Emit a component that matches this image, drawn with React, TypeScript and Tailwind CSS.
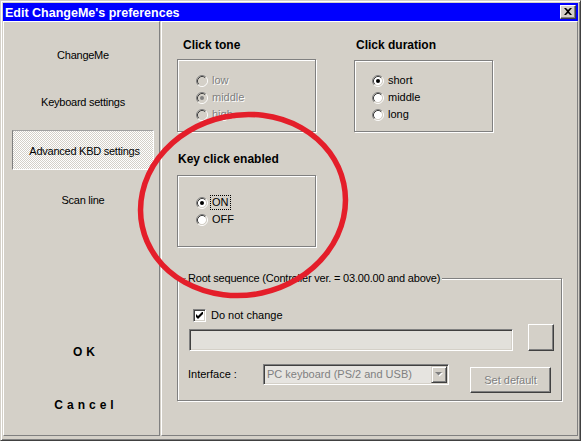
import React from "react";

const Radio = ({ checked = false, disabled = false }: { checked?: boolean; disabled?: boolean }) => (
  <svg width="12" height="12" viewBox="0 0 12 12" className="shrink-0">
    <circle cx="6" cy="6" r="4.2" fill={disabled ? "#d4d0c8" : "#ffffff"} />
    <path d="M2.11 9.89 A5.5 5.5 0 0 1 9.89 2.11" stroke="#808080" fill="none" />
    <path d="M9.89 2.11 A5.5 5.5 0 0 1 2.11 9.89" stroke="#ffffff" fill="none" />
    <path d="M2.82 9.18 A4.5 4.5 0 0 1 9.18 2.82" stroke="#404040" fill="none" />
    <path d="M9.18 2.82 A4.5 4.5 0 0 1 2.82 9.18" stroke="#d4d0c8" fill="none" />
    {checked && <circle cx="6" cy="6" r="2" fill={disabled ? "#808080" : "#000000"} />}
  </svg>
);

const RadioRow = ({
  label,
  checked = false,
  disabled = false,
  focus = false,
}: {
  label: string;
  checked?: boolean;
  disabled?: boolean;
  focus?: boolean;
}) => (
  <div className="flex items-center h-[17px] gap-[4px]">
    <Radio checked={checked} disabled={disabled} />
    {focus ? (
      <span className="border border-dotted border-black px-[1px] -ml-[2px] leading-[13px]">{label}</span>
    ) : (
      <span
        className={
          disabled ? "text-[#808080] [text-shadow:1px_1px_0_#ffffff] leading-[13px]" : "leading-[13px]"
        }
      >
        {label}
      </span>
    )}
  </div>
);

const Tab = ({ label, className = "" }: { label: string; className?: string }) => (
  <div className={`ml-[8px] w-[142px] h-[40px] flex items-center justify-center tracking-[-0.25px] ${className}`}>
    {label}
  </div>
);

export default function App() {
  return (
    <div className="relative w-[581px] h-[441px] overflow-hidden bg-[#d4d0c8] border border-t-[#d4d0c8] border-l-[#d4d0c8] border-r-[#404040] border-b-[#404040] shadow-[inset_1px_1px_0_#ffffff,inset_-1px_-1px_0_#808080] p-[2px] flex flex-col font-['Liberation_Sans',Arial,sans-serif] text-[11px] text-black">
      {/* Title bar */}
      <div className="h-[18px] shrink-0 bg-[#0000ff] flex items-center pl-[2px] pr-[2px]">
        <span className="text-white font-bold text-[12.5px] leading-none pt-[2px]">Edit ChangeMe's preferences</span>
        <div className="ml-auto w-[16px] h-[14px] bg-[#d4d0c8] border border-t-white border-l-white border-r-[#404040] border-b-[#404040] shadow-[inset_-1px_-1px_0_#808080] flex items-center justify-center">
          <svg width="8" height="7" viewBox="0 0 8 7" className="-mt-[1px]">
            <path d="M0 0 H2 L4 2 L6 0 H8 L5 3.5 L8 7 H6 L4 5 L2 7 H0 L3 3.5 Z" fill="#000000" />
          </svg>
        </div>
      </div>

      {/* Body */}
      <div className="flex-1 flex gap-[1px] pb-[2px]">
        {/* Left panel */}
        <div className="w-[157px] shrink-0 border border-t-white border-l-white border-r-[#808080] border-b-[#808080] flex flex-col pt-[13px]">
          <Tab label="ChangeMe" />
          <Tab label="Keyboard settings" className="mt-[7px]" />
          <div className="mt-[8px] ml-[8px] w-[142px] h-[40px] flex items-center justify-center pl-[3px] pt-[2px] tracking-[-0.25px] border border-t-[#a0a0a0] border-l-[#808080] border-r-white border-b-white bg-[#d4d0c8] bg-[image:repeating-conic-gradient(#ffffff_0%_25%,#d4d0c8_0%_50%)] bg-[length:2px_2px]">
            Advanced KBD settings
          </div>
          <Tab label="Scan line" className="mt-[10px]" />
          <div className="mt-[126px] h-[13px] leading-[13px] text-center pl-[9px] font-bold text-[12px] tracking-[4px]">
            OK
          </div>
          <div className="mt-[40px] h-[13px] leading-[13px] text-center pl-[9px] font-bold text-[12px] tracking-[4px]">
            Cancel
          </div>
        </div>

        {/* Right panel */}
        <div className="flex-1 border border-t-white border-l-white border-r-[#808080] border-b-[#808080] pl-[15px] pt-[16px] flex flex-col">
          <div className="flex">
            <div className="w-[139px] flex flex-col">
              <div className="h-[14px] leading-[14px] pl-[6px] font-bold text-[12px]">Click tone</div>
              <div className="mt-[7px] h-[73px] border border-[#808080] shadow-[inset_1px_1px_0_#ffffff,1px_1px_0_#ffffff] pt-[12px] pl-[18px] flex flex-col">
                <RadioRow label="low" disabled />
                <RadioRow label="middle" checked disabled />
                <RadioRow label="high" disabled />
              </div>
            </div>
            <div className="ml-[38px] w-[139px] flex flex-col">
              <div className="h-[14px] leading-[14px] pl-[2px] font-bold text-[12px]">Click duration</div>
              <div className="mt-[8px] h-[72px] border border-[#808080] shadow-[inset_1px_1px_0_#ffffff,1px_1px_0_#ffffff] pt-[11px] pl-[17px] flex flex-col">
                <RadioRow label="short" checked />
                <RadioRow label="middle" />
                <RadioRow label="long" />
              </div>
            </div>
          </div>

          <div className="w-[139px] flex flex-col mt-[20px]">
            <div className="h-[14px] leading-[14px] pl-[1px] font-bold text-[12px]">Key click enabled</div>
            <div className="mt-[9px] h-[72px] border border-[#808080] shadow-[inset_1px_1px_0_#ffffff,1px_1px_0_#ffffff] pt-[18px] pl-[18px] flex flex-col">
              <RadioRow label="ON" checked focus />
              <RadioRow label="OFF" />
            </div>
          </div>

          {/* Root sequence group */}
          <div className="relative mt-[31px] w-[385px] h-[123px] border border-[#808080] shadow-[inset_1px_1px_0_#ffffff,1px_1px_0_#ffffff] pt-[29px] pl-[11px] flex flex-col">
            <span className="absolute left-[8px] -top-[8px] px-[2px] bg-[#d4d0c8] leading-[14px] tracking-[-0.2px]">
              Root sequence (Controller ver. = 03.00.00 and above)
            </span>
            <div className="flex items-center h-[14px] ml-[4px] gap-[5px]">
              <div className="relative w-[13px] h-[13px] bg-white border border-t-[#808080] border-l-[#808080] border-r-white border-b-white shadow-[inset_1px_1px_0_#404040,inset_-1px_-1px_0_#d4d0c8]">
                <svg width="7" height="7" viewBox="0 0 7 7" className="absolute left-[2px] top-[2px]">
                  <path d="M6 0 H7 V2 L3 6 L2 7 L0 5 V2 L2 4 Z" fill="#000000" />
                </svg>
              </div>
              <span className="leading-[13px]">Do not change</span>
            </div>
            <div className="mt-[2px] flex items-end h-[27px]">
              <div className="w-[324px] h-[22px] bg-[#e2e0db] border border-t-[#808080] border-l-[#808080] border-r-white border-b-white shadow-[inset_1px_1px_0_#404040,inset_-1px_-1px_0_#d4d0c8]" />
              <div className="ml-[15px] w-[26px] h-[27px] bg-[#d4d0c8] border border-t-white border-l-white border-r-[#404040] border-b-[#404040] shadow-[inset_-1px_-1px_0_#808080]" />
            </div>
            <div className="mt-[13px] flex items-start">
              <div className="w-[75px] h-[21px] -ml-[1px] flex items-center">Interface :</div>
              <div className="w-[186px] h-[21px] flex items-center bg-[#e6e4e0] border border-t-[#808080] border-l-[#808080] border-r-white border-b-white shadow-[inset_1px_1px_0_#404040,inset_-1px_-1px_0_#d4d0c8] p-[1px]">
                <span className="flex-1 pl-[2px] text-[#808080] leading-[13px]">PC keyboard (PS/2 and USB)</span>
                <div className="w-[16px] h-[17px] bg-[#d4d0c8] border border-t-[#d4d0c8] border-l-[#d4d0c8] border-r-[#404040] border-b-[#404040] shadow-[inset_1px_1px_0_#ffffff,inset_-1px_-1px_0_#808080] flex items-center justify-center">
                  <svg width="8" height="5" viewBox="0 0 8 5">
                    <path d="M1 1 H8 L4.5 4.5 Z" fill="#ffffff" />
                    <path d="M0 0 H7 L3.5 3.5 Z" fill="#808080" />
                  </svg>
                </div>
              </div>
              <div className="ml-[21px] mt-[3px] w-[81px] h-[26px] bg-[#d4d0c8] border border-t-white border-l-white border-r-[#404040] border-b-[#404040] shadow-[inset_-1px_-1px_0_#808080] flex items-center justify-center text-[#808080] [text-shadow:1px_1px_0_#ffffff]">
                Set default
              </div>
            </div>
          </div>
        </div>
      </div>

      {/* Red annotation ellipse */}
      <svg
        className="absolute left-0 top-0 w-[581px] h-[441px] pointer-events-none"
        viewBox="0 0 581 441"
      >
        <ellipse
          cx="242"
          cy="204"
          rx="103"
          ry="90"
          transform="rotate(-12 242 204)"
          fill="none"
          stroke="#e41e2a"
          strokeWidth="5.5"
        />
      </svg>
    </div>
  );
}
